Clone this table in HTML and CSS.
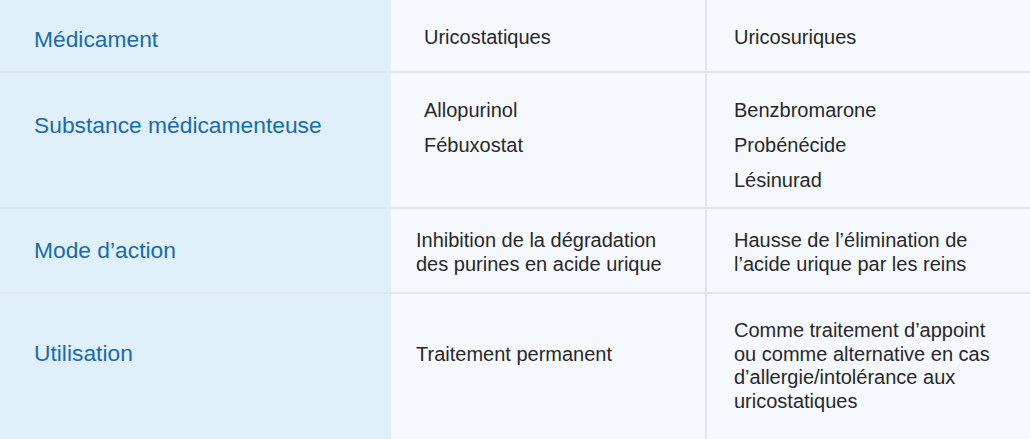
FILE: index.html
```html
<!DOCTYPE html>
<html lang="fr">
<head>
<meta charset="utf-8">
<title>Médicaments contre la goutte</title>
<link rel="stylesheet" href="styles.css">
</head>
<body>
<div class="table">
  <div class="row row-1">
    <div class="head">Médicament</div>
    <div class="cell c2"><p>Uricostatiques</p></div>
    <div class="cell c3"><p>Uricosuriques</p></div>
  </div>
  <div class="row row-2">
    <div class="head">Substance médicamenteuse</div>
    <div class="cell c2 list"><p>Allopurinol</p><p>Fébuxostat</p></div>
    <div class="cell c3 list"><p>Benzbromarone</p><p>Probénécide</p><p>Lésinurad</p></div>
  </div>
  <div class="row row-3">
    <div class="head">Mode d’action</div>
    <div class="cell c2 narrow"><p>Inhibition de la dégradation<br>des purines en acide urique</p></div>
    <div class="cell c3"><p>Hausse de l’élimination de<br>l’acide urique par les reins</p></div>
  </div>
  <div class="row row-4">
    <div class="head">Utilisation</div>
    <div class="cell c2 narrow"><p>Traitement permanent</p></div>
    <div class="cell c3"><p>Comme traitement d’appoint<br>ou comme alternative en cas<br>d’allergie/intolérance aux<br>uricostatiques</p></div>
  </div>
</div>
</body>
</html>
```
FILE: styles.css
```css
html, body {
  margin: 0;
  padding: 0;
  background: #f5f9fd;
}
body {
  width: 1030px;
  height: 439px;
  overflow: hidden;
  font-family: "Liberation Sans", Arial, Helvetica, sans-serif;
}
.table {
  display: flex;
  flex-direction: column;
  height: 439px;
}
.row {
  display: grid;
  grid-template-columns: 391px 316px 1fr;
  box-sizing: border-box;
  border-bottom: 2px solid #dce5f1;
}
.row-1 { height: 73px; }
.row-2 { height: 136px; }
.row-3 { height: 85px; }
.row-4 { flex: 1; border-bottom: none; }

.head {
  background: #e0f0fa;
  color: #1b6ba6;
  font-size: 22.8px;
  line-height: 27px;
  padding-left: 34px;
}
.cell {
  color: #282828;
  font-size: 20px;
  line-height: 23.5px;
}
.cell p { margin: 0; }
.c2 {
  padding-left: 33px;
  border-right: 2px solid #dce5f1;
}
.c2.narrow { padding-left: 25px; }
.c3 { padding-left: 27px; }
.list p { line-height: 35px; }

.row-1 .head { padding-top: 26px; }
.row-1 .cell { padding-top: 26px; }
.row-2 .head { padding-top: 39px; }
.row-2 .cell { padding-top: 20px; }
.row-3 .head { padding-top: 28px; }
.row-3 .cell { padding-top: 20px; }
.row-4 .head { padding-top: 46px; }
.row-4 .c2 { padding-top: 49px; }
.row-4 .c3 { padding-top: 25px; }
```
